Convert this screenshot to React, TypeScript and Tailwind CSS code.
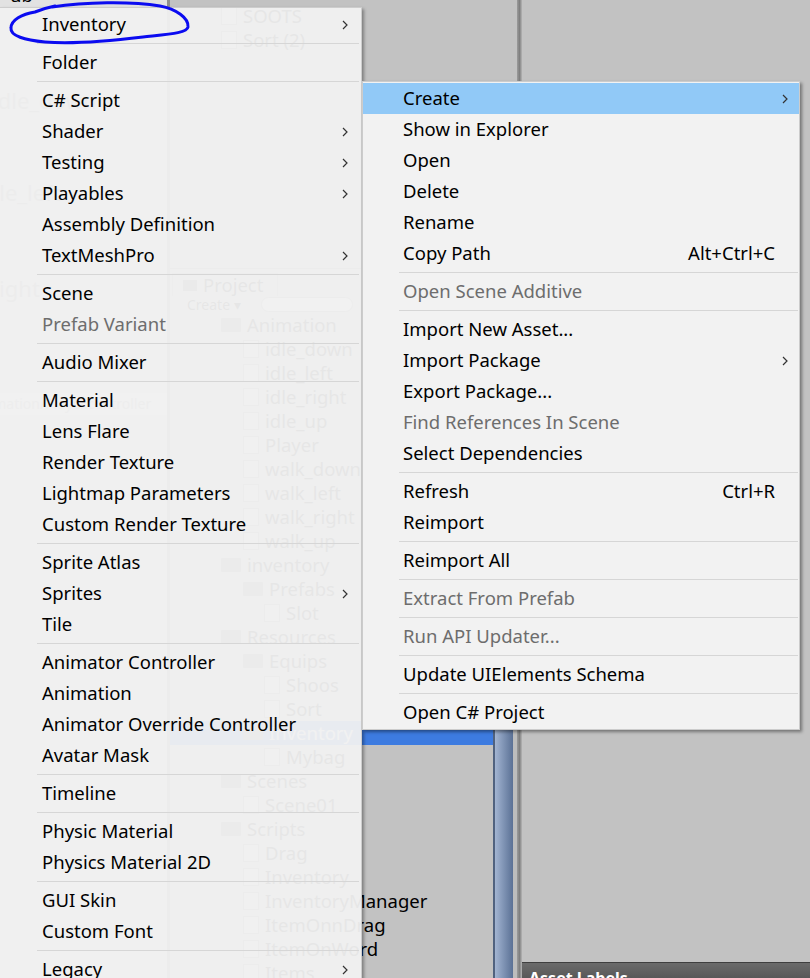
import React from "react";

type Item = {
  label?: string;
  sub?: boolean;
  disabled?: boolean;
  shortcut?: string;
  active?: boolean;
  sep?: boolean;
};

const SEP: Item = { sep: true };

const leftItems: Item[] = [
  { label: "Inventory", sub: true },
  SEP,
  { label: "Folder" },
  SEP,
  { label: "C# Script" },
  { label: "Shader", sub: true },
  { label: "Testing", sub: true },
  { label: "Playables", sub: true },
  { label: "Assembly Definition" },
  { label: "TextMeshPro", sub: true },
  SEP,
  { label: "Scene" },
  { label: "Prefab Variant", disabled: true },
  SEP,
  { label: "Audio Mixer" },
  SEP,
  { label: "Material" },
  { label: "Lens Flare" },
  { label: "Render Texture" },
  { label: "Lightmap Parameters" },
  { label: "Custom Render Texture" },
  SEP,
  { label: "Sprite Atlas" },
  { label: "Sprites", sub: true },
  { label: "Tile" },
  SEP,
  { label: "Animator Controller" },
  { label: "Animation" },
  { label: "Animator Override Controller" },
  { label: "Avatar Mask" },
  SEP,
  { label: "Timeline" },
  SEP,
  { label: "Physic Material" },
  { label: "Physics Material 2D" },
  SEP,
  { label: "GUI Skin" },
  { label: "Custom Font" },
  SEP,
  { label: "Legacy", sub: true },
];

const rightItems: Item[] = [
  { label: "Create", sub: true, active: true },
  { label: "Show in Explorer" },
  { label: "Open" },
  { label: "Delete" },
  { label: "Rename" },
  { label: "Copy Path", shortcut: "Alt+Ctrl+C" },
  SEP,
  { label: "Open Scene Additive", disabled: true },
  SEP,
  { label: "Import New Asset..." },
  { label: "Import Package", sub: true },
  { label: "Export Package..." },
  { label: "Find References In Scene", disabled: true },
  { label: "Select Dependencies" },
  SEP,
  { label: "Refresh", shortcut: "Ctrl+R" },
  { label: "Reimport" },
  SEP,
  { label: "Reimport All" },
  SEP,
  { label: "Extract From Prefab", disabled: true },
  SEP,
  { label: "Run API Updater...", disabled: true },
  SEP,
  { label: "Update UIElements Schema" },
  SEP,
  { label: "Open C# Project" },
];

type TreeRow = { label: string; depth: 1 | 2 | 3; folder?: boolean; selected?: boolean };

const tree: TreeRow[] = [
  { label: "Animation", depth: 1, folder: true },
  { label: "idle_down", depth: 2 },
  { label: "idle_left", depth: 2 },
  { label: "idle_right", depth: 2 },
  { label: "idle_up", depth: 2 },
  { label: "Player", depth: 2 },
  { label: "walk_down", depth: 2 },
  { label: "walk_left", depth: 2 },
  { label: "walk_right", depth: 2 },
  { label: "walk_up", depth: 2 },
  { label: "inventory", depth: 1, folder: true },
  { label: "Prefabs", depth: 2, folder: true },
  { label: "Slot", depth: 3 },
  { label: "Resources", depth: 1, folder: true },
  { label: "Equips", depth: 2, folder: true },
  { label: "Shoos", depth: 3 },
  { label: "Sort", depth: 3 },
  { label: "Inventory", depth: 2, folder: true, selected: true },
  { label: "Mybag", depth: 3 },
  { label: "Scenes", depth: 1, folder: true },
  { label: "Scene01", depth: 2 },
  { label: "Scripts", depth: 1, folder: true },
  { label: "Drag", depth: 2 },
  { label: "Inventory", depth: 2 },
  { label: "InventoryManager", depth: 2 },
  { label: "ItemOnnDrag", depth: 2 },
  { label: "ItemOnWord", depth: 2 },
  { label: "Items", depth: 2 },
];

const depthPad = { 1: "pl-[51px]", 2: "pl-[73px]", 3: "pl-[94px]" };

const Chevron = () => (
  <svg width="6" height="10" viewBox="0 0 6 10" fill="none">
    <polyline points="1,1 5,5 1,9" stroke="#333" strokeWidth="1.2" />
  </svg>
);

const LeftRow = ({ item }: { item: Item }) => {
  if (item.sep)
    return (
      <div className="h-[7px] flex items-center ml-[37px] mr-[2px]">
        <div className="h-px w-full bg-[#d6d6d6]" />
      </div>
    );
  return (
    <div className="h-[31px] flex items-center pl-[42px] pr-[13px]">
      <span className={`flex-1 whitespace-nowrap ${item.disabled ? "text-[#6d6d6d]" : "text-black"}`}>{item.label}</span>
      {item.sub && <Chevron />}
    </div>
  );
};

const RightRow = ({ item }: { item: Item }) => {
  if (item.sep)
    return (
      <div className="h-[7px] flex items-center ml-[36px] mr-[1px]">
        <div className="h-px w-full bg-[#d6d6d6]" />
      </div>
    );
  return (
    <div
      className={`h-[31px] flex items-center pl-[40px] ${item.sub ? "pr-[11px]" : "pr-[24px]"} ${
        item.active ? "bg-[#91c9f7]" : ""
      }`}
    >
      <span className={`flex-1 whitespace-nowrap ${item.disabled ? "text-[#6d6d6d]" : "text-black"}`}>{item.label}</span>
      {item.shortcut && <span className="text-black">{item.shortcut}</span>}
      {item.sub && <Chevron />}
    </div>
  );
};

const FileIcon = ({ folder }: { folder?: boolean }) =>
  folder ? (
    <div className="w-[20px] h-[14px] bg-[#7a7a7a] rounded-[1px] shrink-0" />
  ) : (
    <div className="w-[16px] h-[18px] border border-[#8a8a8a] bg-[#d8d8d8] shrink-0" />
  );

const App: React.FC = () => {
  return (
    <div className="relative w-[810px] h-[978px] overflow-hidden bg-[#c2c2c2] font-['Noto_Sans',sans-serif] text-[18.5px] leading-none">
      {/* editor behind the menus */}
      <div className="flex h-full">
        <div className="w-[167px] bg-[#e2e2e2] flex flex-col">
          <div className="h-[24px] shrink-0 -mt-[17px] pl-[10px] flex items-center text-black">ub</div>
          <div className="mt-[76px] h-[34px] shrink-0 bg-[#d8d8d8] flex items-center text-[22px] text-[#888] -ml-[8px]">idle_down</div>
          <div className="mt-[58px] h-[34px] shrink-0 bg-[#d8d8d8] flex items-center text-[22px] text-[#888] -ml-[20px]">idle_left</div>
          <div className="mt-[62px] h-[34px] shrink-0 bg-[#dadada] flex items-center text-[22px] text-[#888] -ml-[10px]">right</div>
          <div className="mt-[88px] h-[22px] shrink-0 bg-[#ececec] flex items-center text-[14px] text-[#999] -ml-[28px] whitespace-nowrap">Animation/Player.controller</div>
        </div>
        <div className="w-[3px] bg-[#8e8e8e]" />
        <div className="w-[347px] flex flex-col min-h-0">
          <div className="h-[268px] shrink-0 pt-[4px] flex flex-col">
            {["SOOTS", "Sort (2)"].map((t) => (
              <div key={t} className="h-[24px] flex items-center gap-[6px] pl-[51px] text-black">
                <FileIcon />
                <span>{t}</span>
              </div>
            ))}
          </div>
          <div className="flex-1 min-h-0 flex flex-col border-t border-[#8e8e8e]">
            <div className="h-[27px] shrink-0 flex items-end pl-[2px]">
              <div className="h-[23px] w-[106px] bg-[#cbcbcb] border border-[#9a9a9a] border-b-0 flex items-center gap-[6px] pl-[10px] text-black">
                <div className="w-[14px] h-[11px] bg-[#666]" />
                Project
              </div>
            </div>
            <div className="h-[17px] shrink-0 flex items-center gap-[14px] pl-[11px] bg-[#cbcbcb] text-[14px] text-black">
              <span className="px-[6px]">Create ▾</span>
              <div className="h-[15px] w-[92px] rounded-full border border-[#888] bg-[#eee]" />
            </div>
            <div className="flex-1 min-h-0 flex">
              <div className="w-[323px] flex flex-col">
                {tree.map((r, i) => (
                  <div
                    key={i}
                    className={`h-[24px] shrink-0 flex items-center gap-[6px] whitespace-nowrap ${depthPad[r.depth]} ${
                      r.selected ? "bg-[#3d7be0] text-white" : "text-black"
                    }`}
                  >
                    <FileIcon folder={r.folder} />
                    <span>{r.label}</span>
                  </div>
                ))}
              </div>
              <div className="w-[20px] border-l-2 border-[#50627f] bg-gradient-to-r from-[#a3b5d2] to-[#5b7195]" />
              <div className="w-[4px] bg-[#bdbdbd]" />
            </div>
          </div>
        </div>
        <div className="w-[5px] bg-gradient-to-r from-[#9c9c9c] via-[#7f7f7f] to-[#b5b5b5]" />
        <div className="flex-1 flex flex-col">
          <div className="flex-1" />
          <div className="h-[16px] shrink-0 border-t border-[#3f3f3f] bg-gradient-to-b from-[#6b6b6b] to-[#585858] pl-[7px] pt-[5px] overflow-hidden">
            <span className="text-white font-bold text-[16px]">Asset Labels</span>
          </div>
        </div>
      </div>

      {/* left context menu (slightly see-through) */}
      <div className="absolute left-0 top-[7px] w-[362px] h-[990px] bg-[rgba(240,240,240,0.955)] border-t border-r border-[#cdcdcd] pt-[1px] shadow-[2px_2px_3px_rgba(0,0,0,0.35)]">
        {leftItems.map((it, i) => (
          <LeftRow key={i} item={it} />
        ))}
      </div>

      {/* right context menu */}
      <div className="absolute left-[362px] top-[81px] w-[438px] bg-[#f2f2f2] border border-[#cccccc] py-[1px] shadow-[2px_2px_3px_rgba(0,0,0,0.4)]">
        {rightItems.map((it, i) => (
          <RightRow key={i} item={it} />
        ))}
      </div>

      {/* hand-drawn circle around Inventory */}
      <svg className="absolute left-0 top-0 pointer-events-none" width="200" height="50" viewBox="0 0 200 50" fill="none">
        <path
          d="M52 7 C 85 2, 130 1, 160 6 C 176 9, 189 18, 188 27 C 187 33, 170 34, 143 37 C 110 41, 70 44, 45 42 C 25 40, 10 36, 11 28 C 11 20, 22 14, 35 12 C 40 10, 45 8, 55 6"
          stroke="#0b0bf0"
          strokeWidth="3"
          strokeLinecap="round"
        />
      </svg>
    </div>
  );
};

export default App;
